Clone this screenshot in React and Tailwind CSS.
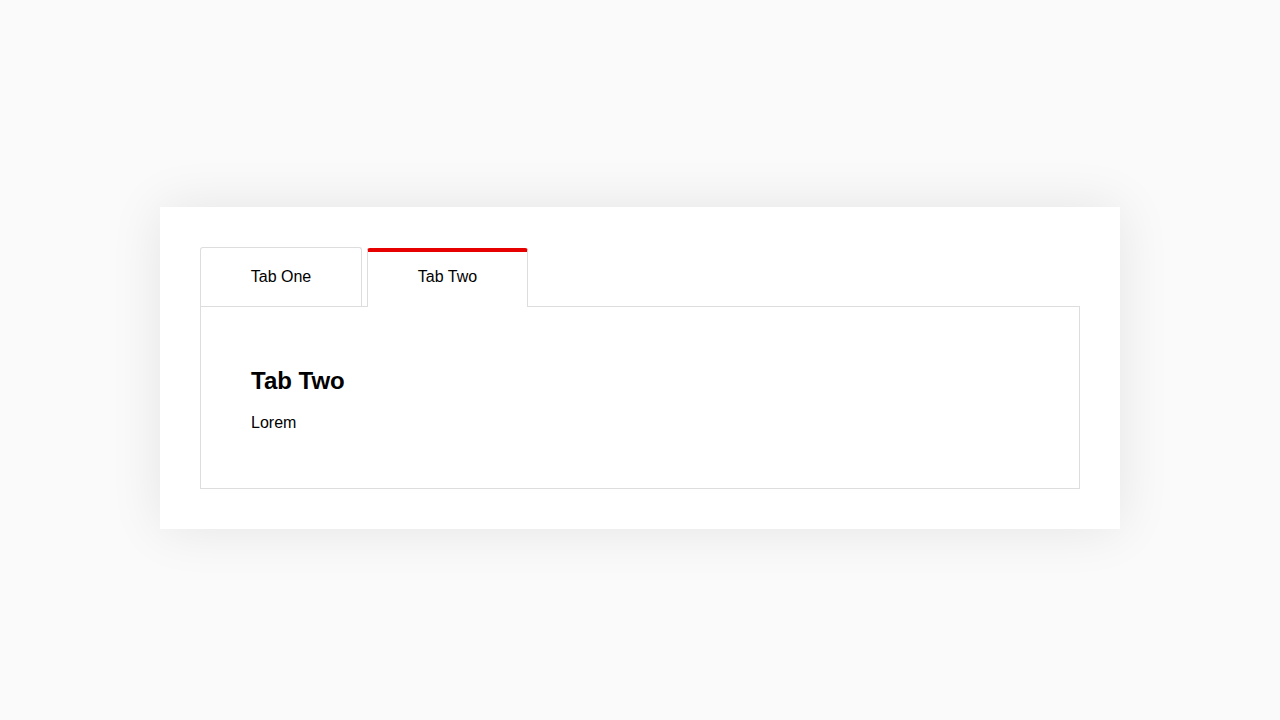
import React, { useState } from "react";

const tabs = [
  { id: "one", label: "Tab One", title: "Tab One", body: "Lorem" },
  { id: "two", label: "Tab Two", title: "Tab Two", body: "Lorem" },
];

export default function App() {
  const [active, setActive] = useState("two");
  const current = tabs.find((t) => t.id === active);

  return (
    <div
      className="min-h-screen w-full bg-[#fafafa] flex items-center justify-center pt-4"
      style={{ fontFamily: '"Liberation Sans", Arial, sans-serif' }}
    >
      <div className="w-[960px] bg-white p-10 shadow-[0_0_50px_rgba(0,0,0,0.09)] text-black">
        <div className="flex gap-[5px] items-end">
          {tabs.map((tab) =>
            tab.id === active ? (
              <button
                key={tab.id}
                onClick={() => setActive(tab.id)}
                className="relative z-10 w-[161px] h-[59px] -mb-px bg-white border-x border-[#dddddd] border-t-4 border-t-[#e60000] rounded-t-[3px] pb-[5px] text-base"
              >
                {tab.label}
              </button>
            ) : (
              <button
                key={tab.id}
                onClick={() => setActive(tab.id)}
                className="w-[162px] h-[59px] bg-white border border-b-0 border-[#dddddd] rounded-t-[3px] text-base"
              >
                {tab.label}
              </button>
            )
          )}
        </div>
        <div className="border border-[#dddddd] h-[183px] px-[50px] pt-[60px]">
          <h2 className="text-2xl font-bold leading-7">{current.title}</h2>
          <p className="mt-[16px] text-base">{current.body}</p>
        </div>
      </div>
    </div>
  );
}
